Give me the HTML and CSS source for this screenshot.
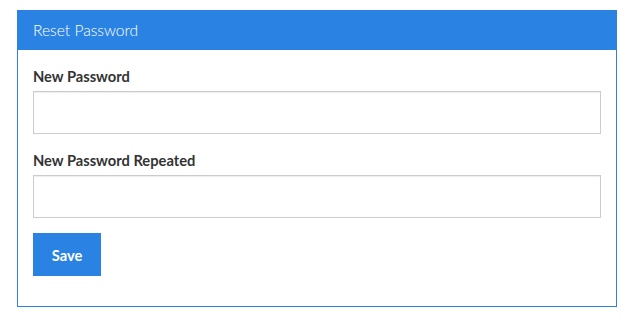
FILE: index.html
```html
<!DOCTYPE html>
<html lang="en">
<head>
<meta charset="utf-8"/>
<meta content="width=device-width, initial-scale=1.0" name="viewport"/>
<title>Reset Password</title>
<link rel="stylesheet" href="styles.css">
</head>
<body>
<div class="panel">
  <div class="panel-heading">Reset Password</div>
  <form class="panel-body" onsubmit="return false;">
    <div class="form-group">
      <label for="password">New Password</label>
      <input id="password" type="password"/>
    </div>
    <div class="form-group">
      <label for="passwordRepeated">New Password Repeated</label>
      <input id="passwordRepeated" type="password"/>
    </div>
    <button type="submit">Save</button>
  </form>
</div>
</body>
</html>
```

FILE: styles.css
```css
body {
  margin: 0;
  padding: 10px 14px 0 17px;
  font-family: Lato, "Open Sans", sans-serif;
  background: #fff;
}
.panel {
  width: 600px;
  box-sizing: border-box;
  border: 1px solid #2a83e3;
}
.panel-heading {
  height: 40px;
  margin: -1px -1px 0 -1px;
  padding: 0 16px;
  line-height: 40px;
  background: #2a83e3;
  color: #fff;
  font-size: 15.6px;
  font-weight: 300;
}
.panel-body {
  padding: 16px 15px 30px 15px;
  margin: 0;
}
.form-group {
  margin-bottom: 16px;
}
label {
  display: block;
  margin-bottom: 5px;
  line-height: 20px;
  font-size: 14.7px;
  font-weight: 700;
  color: #333;
}
input {
  display: block;
  width: 100%;
  height: 43px;
  box-sizing: border-box;
  padding: 6px 12px;
  border: 1px solid #ccc;
  border-radius: 0;
  box-shadow: inset 0 1px 1px rgba(0, 0, 0, 0.075);
  font-size: 14px;
}
button {
  display: block;
  width: 68px;
  height: 43px;
  padding: 0;
  margin-top: -1px;
  background: #2a83e3;
  color: #fff;
  border: none;
  border-radius: 0;
  font-family: Lato, "Open Sans", sans-serif;
  font-size: 14.7px;
  font-weight: 700;
}
```
